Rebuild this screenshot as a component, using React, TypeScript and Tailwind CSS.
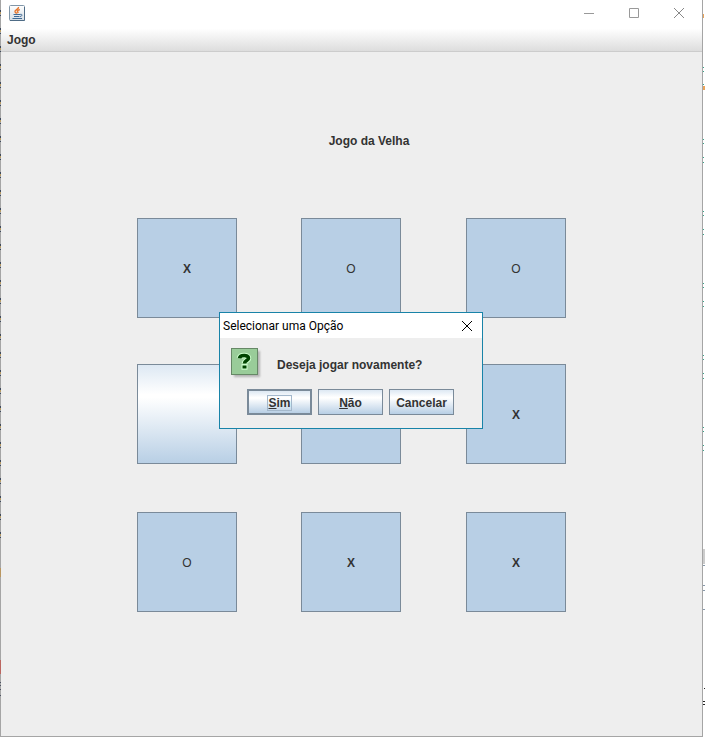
const METAL =
  "bg-[linear-gradient(to_bottom,#dde8f3_0%,#ffffff_30%,#ffffff_33%,#b8cfe5_100%)]";

type Cell = { mark: "X" | "O" | ""; played: boolean };

const board: Cell[] = [
  { mark: "X", played: true },
  { mark: "O", played: true },
  { mark: "O", played: true },
  { mark: "", played: false },
  { mark: "", played: true },
  { mark: "X", played: true },
  { mark: "O", played: true },
  { mark: "X", played: true },
  { mark: "X", played: true },
];

const edgeMarks = [67, 71, 84, 139, 143, 157, 162, 211, 215, 229, 234, 283, 287, 301, 306, 355, 359, 373, 378, 427, 431, 445, 450];

const leftMarks = Array.from({ length: 30 }, (_, i) => 10 + i * 18);

function JavaIcon() {
  return (
    <svg width="17" height="17" viewBox="0 0 17 17" aria-hidden="true">
      <defs>
        <linearGradient id="cup" x1="0" y1="0" x2="0" y2="1">
          <stop offset="0" stopColor="#ffffff" />
          <stop offset="1" stopColor="#d5dde4" />
        </linearGradient>
      </defs>
      <rect x="0.5" y="0.5" width="15" height="15" rx="1" fill="url(#cup)" stroke="#8096a8" />
      <path d="M1 15.5h14.5V2" fill="none" stroke="#4f6c86" />
      <path d="M9.5 2C10 4.2 5.500 5 6 6.800C6.300 7.600 7.500 7.800 7.500 8.800M10.800 4.500C8 5.500 8 6.300 9.300 8" fill="none" stroke="#e8762c" strokeWidth="1.5" />
      <path d="M4.500 9.500h6.500M5 11.500h5.500M3.500 13.500h9.500" fill="none" stroke="#3f6a96" />
      <path d="M11 9.500c2.800-.8 2.500 1.800 0 2" fill="none" stroke="#3f6a96" />
    </svg>
  );
}

function QuestionIcon() {
  return (
    <svg width="32" height="32" viewBox="0 0 32 32" aria-hidden="true">
      <defs>
        <filter id="shade" x="-20%" y="-20%" width="150%" height="150%">
          <feGaussianBlur stdDeviation="1.3" />
        </filter>
      </defs>
      <rect x="3" y="3" width="26" height="26" fill="#999999" opacity="0.7" filter="url(#shade)" />
      <rect x="0.5" y="0.5" width="26" height="26" fill="#99cc99" stroke="#668866" />
      <g fill="none" strokeLinejoin="round">
        <path d="M8.500 10.200C9 6.800 17.500 6.500 17.500 10.200C17.500 12.700 13.500 12.500 13.500 15.500" stroke="#ccffcc" strokeWidth="5.600" />
        <path d="M13.500 16v5.700" stroke="#ccffcc" strokeWidth="6" />
        <path d="M8.500 10.200C9 6.800 17.500 6.500 17.500 10.200C17.500 12.700 13.500 12.500 13.500 15.500" stroke="#004400" strokeWidth="3.600" />
        <path d="M13.500 17.500v3" stroke="#004400" strokeWidth="4" />
      </g>
    </svg>
  );
}

function WindowControls() {
  return (
    <div className="flex">
      <button aria-label="Minimizar" className="flex h-[26px] w-[46px] items-center justify-center">
        <svg width="10" height="10" viewBox="0 0 10 10" stroke="#999999"><path d="M0 5.500h10" /></svg>
      </button>
      <button aria-label="Maximizar" className="flex h-[26px] w-[44px] items-center justify-center">
        <svg width="10" height="10" viewBox="0 0 10 10" stroke="#999999" fill="none"><path d="M.5.5h9v9h-9z" /></svg>
      </button>
      <button aria-label="Fechar" className="flex h-[26px] w-[46px] items-center justify-center">
        <svg width="10" height="10" viewBox="0 0 10 10" stroke="#888888"><path d="M0 0l10 10M10 0L0 10" /></svg>
      </button>
    </div>
  );
}

function Dialog() {
  const button = `h-[26px] w-[65px] border-[#7a8a99] pt-px text-center leading-4 ${METAL}`;
  return (
    <section
      role="dialog"
      aria-labelledby="dialog-title"
      className="absolute left-[218px] top-[312px] w-[264px] border border-[#1883a8] bg-[#eeeeee] pb-[13px]"
    >
      <header className="flex h-[25px] items-center justify-between bg-white pl-[3px] pr-[10px]">
        <h2 id="dialog-title" className="font-[Roboto,'Noto_Sans',sans-serif] text-[12px] font-normal leading-4 text-black">
          Selecionar uma Opção
        </h2>
        <button aria-label="Fechar">
          <svg width="10" height="10" viewBox="0 0 10 10" stroke="#000000"><path d="M0 0l10 10M10 0L0 10" /></svg>
        </button>
      </header>
      <div className="flex items-start pl-[11px] pt-[10px]">
        <QuestionIcon />
        <p className="ml-[14px] mt-[9px] leading-4">Deseja jogar novamente?</p>
      </div>
      <div className="mt-[9px] flex gap-[6px] pl-[27px]">
        <button className={`${button} border-2`}>
          <span className="border border-[#a3b8cc]"><u>S</u>im</span>
        </button>
        <button className={`${button} border`}><u>N</u>ão</button>
        <button className={`${button} border`}>Cancelar</button>
      </div>
    </section>
  );
}

export default function App() {
  return (
    <div className="relative flex min-h-screen overflow-hidden bg-white pr-[2px] font-['Liberation_Sans',Arial,sans-serif] text-[12px] font-bold text-[#333333]">
      <div className="relative flex flex-1 flex-col border-x border-b border-[#a5a5a5] bg-[#eeeeee]">
        <header className="flex h-[26px] items-center justify-between bg-white pl-2">
          <JavaIcon />
          <WindowControls />
        </header>
        <nav className="flex h-[26px] items-center border-b border-[#cccccc] bg-[linear-gradient(to_bottom,#ffffff_10%,#dddddd_100%)] pl-[6px] pt-[2px]">
          <button className="leading-4">Jogo</button>
        </nav>
        <main className="flex flex-col items-center">
          <h1 className="mt-[81px] pl-[35px] leading-4">Jogo da Velha</h1>
          <div className="mt-[69px] grid grid-cols-[164px_165px_100px] grid-rows-[146px_148px_100px]">
            {board.map(({ mark, played }, i) => (
              <button
                key={i}
                aria-label={`Casa ${i + 1}`}
                className={`h-[100px] w-[100px] border border-[#7a8a99] pt-[2px] ${played ? "bg-[#b8cfe5]" : METAL} ${mark === "O" ? "font-normal" : ""}`}
              >
                {mark}
              </button>
            ))}
          </div>
        </main>
        <Dialog />
      </div>
      <svg className="absolute left-0 top-0" width="1" height="737" aria-hidden="true">
        {leftMarks.map((y) => (
          <g key={y}>
            <rect y={y} width="1" height="2" fill="#3f4a5c" />
            <rect y={y + 2} width="1" height="2" fill="#b59a63" />
            <rect y={y + 5} width="1" height="1" fill="#3f4a5c" />
          </g>
        ))}
        <rect y="568" width="1" height="9" fill="#b99660" />
        <rect y="660" width="1" height="14" fill="#bb6660" />
        <path d="M0 682.500h1M0 685.500h1M0 689.500h1M0 695.500h1" stroke="#4c5262" />
      </svg>
      <svg className="absolute right-0 top-0" width="2" height="737" aria-hidden="true">
        {edgeMarks.map((y) => (
          <rect key={y} y={y} width="1" height="1" fill="#39a58c" />
        ))}
        <rect y="14" width="1" height="4" fill="#e9a45b" />
        <rect y="86" width="2" height="4" fill="#e9a45b" />
        <rect y="549" width="2" height="15" fill="#cccccc" />
        <path d="M0 565.500h2M0 585.500h2M0 590.500h2M0 609.500h2" stroke="#8899aa" />
        <path d="M1 688.500h1M0 701.500h2M0 704.500h2" stroke="#222222" />
      </svg>
    </div>
  );
}
